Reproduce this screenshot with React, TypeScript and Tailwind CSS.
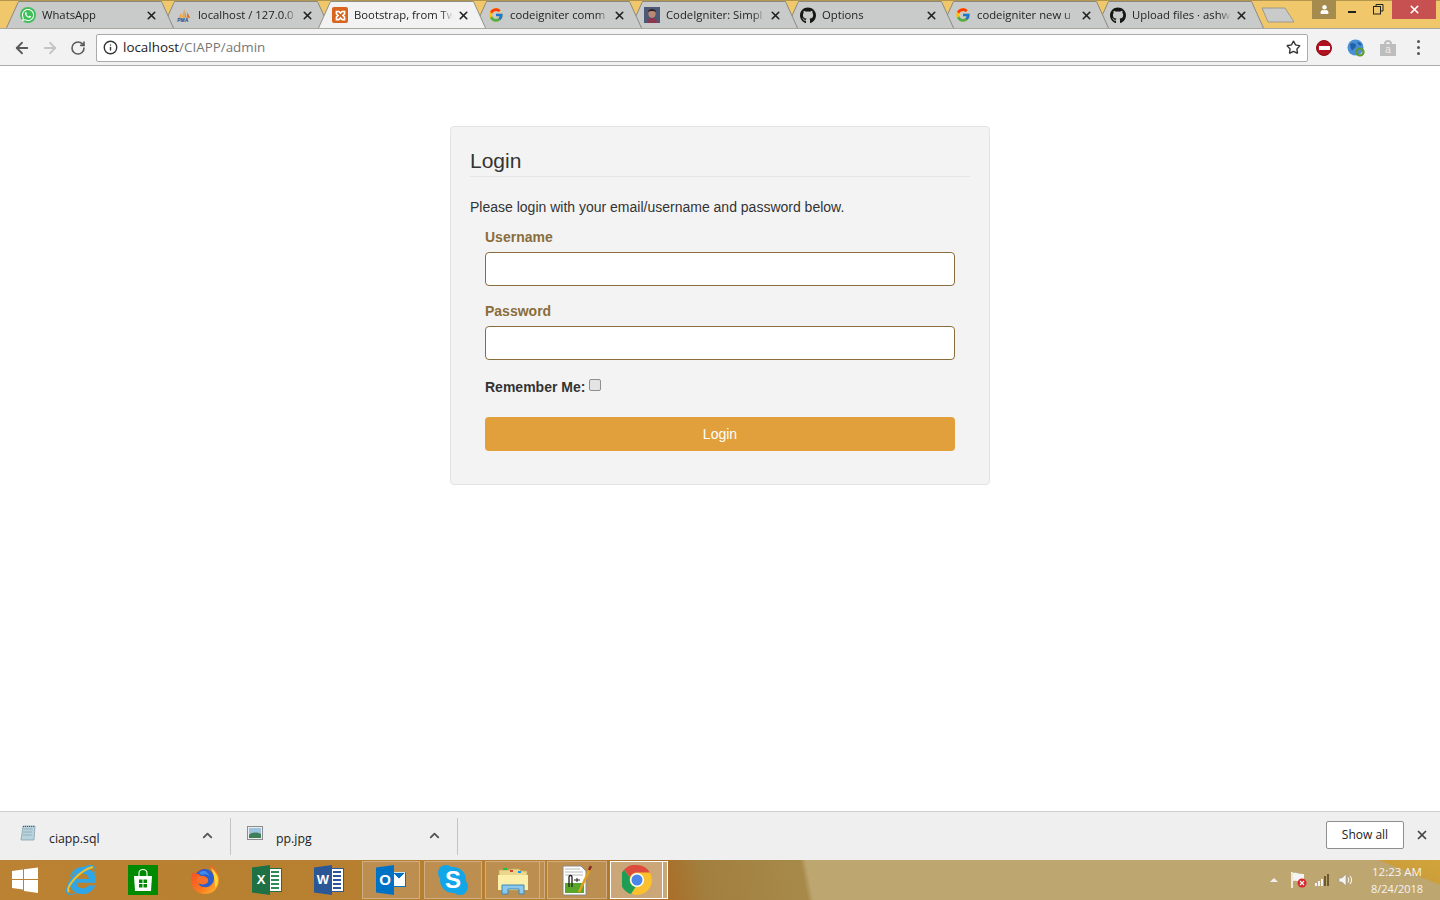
import { ArrowLeft, ArrowRight, ChevronUp, Info, RotateCw, Star, X } from "lucide-react";
import { FcGoogle } from "react-icons/fc";
import { FaGithub, FaInternetExplorer, FaUser, FaWhatsapp } from "react-icons/fa";

const uiFont = "font-['Open_Sans',sans-serif]";
const pageFont = "font-['Liberation_Sans',Arial,sans-serif]";

const XamppIcon = () => (
  <div className="w-4 h-4 rounded-[2px] bg-[#D9641E] flex items-center justify-center">
    <svg viewBox="0 0 16 16" className="w-[13px] h-[13px]" fill="none" stroke="#fff" strokeWidth="2">
      <path d="M3 3h3l2 2 2-2h3v3l-2 2 2 2v3h-3l-2-2-2 2H3v-3l2-2-2-2z" />
    </svg>
  </div>
);

const PmaIcon = () => (
  <svg viewBox="0 0 18 16" className="w-[17px] h-4">
    <path d="M3 11 6 5v6z" fill="#F0A040" />
    <path d="M6.500 11 9 2v9z" fill="#F2A63A" />
    <path d="M9.500 11V1l2.500 10z" fill="#E8912C" />
    <path d="M12.500 11V5l3.500 6z" fill="#D9701E" />
    <text x="1.500" y="15.500" fontSize="5.500" fontWeight="700" fontStyle="italic" fill="#27407F" fontFamily="Liberation Sans">PMA</text>
  </svg>
);

const AvatarIcon = () => (
  <svg viewBox="0 0 16 16" className="w-4 h-4">
    <rect width="16" height="16" fill="#4C5A78" />
    <ellipse cx="8" cy="6.500" rx="3.600" ry="4.400" fill="#B98A72" />
    <path d="M4 5c0-4 8-4 8 0-2-1.500-6-1.500-8 0z" fill="#2A2024" />
    <path d="M3 16c0-4 2-5 5-5s5 1 5 5z" fill="#8E3550" />
  </svg>
);

const WhatsappIcon = () => (
  <div className="w-4 h-4 rounded-full bg-[#3FBF5A] flex items-center justify-center">
    <FaWhatsapp className="text-white text-[14px]" />
  </div>
);

// titles stop where the reference fades them out
const tabs = [
  { title: "WhatsApp", icon: <WhatsappIcon /> },
  { title: "localhost / 127.0.0", icon: <PmaIcon /> },
  { title: "Bootstrap, from Tw", icon: <XamppIcon />, active: true },
  { title: "codeigniter comm", icon: <FcGoogle className="text-[16px]" /> },
  { title: "CodeIgniter: Simpl", icon: <AvatarIcon /> },
  { title: "Options", icon: <FaGithub className="text-[17px] text-[#161614]" /> },
  { title: "codeigniter new u", icon: <FcGoogle className="text-[16px]" />, tight: true },
  { title: "Upload files · ashw", icon: <FaGithub className="text-[17px] text-[#161614]" />, tight: true },
];

const Tab = ({ title, icon, active, tight, index }: { title: string; icon: React.ReactNode; active?: boolean; tight?: boolean; index: number }) => (
  <div
    className={`relative w-[168px] h-[28px] shrink-0 first:ml-0 ${tight ? "-ml-[13px]" : "-ml-[12px]"}`}
    style={{ zIndex: active ? 20 : 10 - index }}
  >
    <svg viewBox="0 0 168 28" className="absolute inset-0 w-[168px] h-[28px]">
      <path
        d="M0.500 28 L12.500 1.500 L155.500 1.500 L167.500 28"
        fill={active ? "#F2F2F2" : "#C9CACA"}
        stroke={active ? "#8F8F85" : "#8A8A80"}
      />
    </svg>
    <div className="relative flex items-center h-[28px] pt-[2px]">
      <div className="ml-[14px] w-4 h-4 flex items-center justify-center shrink-0">{icon}</div>
      <div className="ml-[6px] w-[99px] overflow-hidden whitespace-nowrap text-[11.300px] text-[#222] [mask-image:linear-gradient(to_right,#000_88%,transparent)]">
        {title}
      </div>
      <X className="ml-[4px] w-[13px] h-[13px] text-[#222] shrink-0" strokeWidth={3} />
    </div>
  </div>
);

const TitleBar = () => (
  <div className={`h-[29px] flex bg-[#F0C76A] border-t border-[#B5964F] border-b-[1px] border-b-[#A8A8A0] pl-[6px] relative ${uiFont}`}>
    <div className="flex -mb-[1px] -mt-[1px]">
      {tabs.map((t, i) => (
        <Tab key={t.title} title={t.title} icon={t.icon} active={t.active} tight={t.tight} index={i} />
      ))}
      <svg viewBox="0 0 36 18" className="w-9 h-[18px] mt-[6px] -ml-[3px] shrink-0">
        <path d="M1 2 H24 L33 16 H7 Z" fill="#C9CACA" stroke="#9A9A8E" />
      </svg>
    </div>
    <div className="flex items-start ml-auto -mt-[1px] h-5">
      <div className="w-6 h-[19px] bg-[#A68B4E] flex items-center justify-center">
        <FaUser className="text-white text-[9px]" />
      </div>
      <div className="w-[32px] h-[19px] flex items-center justify-center">
        <div className="w-2 h-[2px] bg-[#222] mt-[5px]" />
      </div>
      <div className="w-[20px] h-[19px] flex items-center justify-center">
        <svg viewBox="0 0 11 11" className="w-[11px] h-[11px]" fill="none" stroke="#222" strokeWidth="1">
          <path d="M3 2.500V.500h7v6.500H8" />
          <rect x=".5" y="2.500" width="7" height="7.500" />
        </svg>
      </div>
      <div className="ml-[4px] mr-[4px] w-[44px] h-[19px] bg-[#C75050] flex items-center justify-center">
        <X className="w-[13px] h-[13px] text-white" strokeWidth={3} />
      </div>
    </div>
  </div>
);

const Toolbar = () => (
  <div className="h-[37px] bg-[#F2F2F2] border-b border-[#ABABAB] flex items-center pl-[13px] pt-[1px]">
    <ArrowLeft className="w-[18px] h-[18px] text-[#5A5A5A]" strokeWidth={2.400} />
    <ArrowRight className="ml-[10px] w-[18px] h-[18px] text-[#C4C4C4]" strokeWidth={2.400} />
    <RotateCw className="ml-[11px] w-[16px] h-[16px] text-[#5A5A5A]" strokeWidth={2.400} />
    <div className="ml-[10px] w-[1212px] h-[28px] bg-white border border-[#ABABAB] rounded-[2px] flex items-center pl-[6px] pr-[6px]">
      <Info className="w-[15px] h-[15px] text-[#333]" strokeWidth={2.200} />
      <span className={`ml-[5px] text-[13.400px] text-[#222] ${uiFont}`}>localhost</span>
      <span className={`text-[13.400px] text-[#777] ${uiFont}`}>/CIAPP/admin</span>
      <Star className="ml-auto w-[15px] h-[15px] text-[#333]" strokeWidth={2.200} />
    </div>
    <div className="ml-[8px] w-[16px] h-[16px] rounded-full bg-[#B01220] flex items-center justify-center border border-[#8E0C18]">
      <div className="w-[11px] h-[4px] bg-white" />
    </div>
    <svg viewBox="0 0 18 18" className="ml-[15px] w-[18px] h-[18px]">
      <circle cx="8.500" cy="8.500" r="8" fill="#4A8FD8" />
      <path d="M3 5c3-2 5-1 6 1s-2 3-3 5-3-3-3-6zM10 3c2 0 4 1 5 3-2 1-4 0-5-3z" fill="#2462A8" />
      <circle cx="13" cy="13" r="3.500" fill="none" stroke="#5E9A2E" strokeWidth="2.200" />
    </svg>
    <div className={`ml-[15px] relative w-[16px] h-[16px] ${pageFont}`}>
      <div className="absolute left-[4px] top-0 w-[8px] h-[6px] rounded-t-[4px] border-2 border-[#BDBDBD]" />
      <div className="absolute left-0 bottom-0 w-[16px] h-[12px] bg-[#BDBDBD] flex items-center justify-center text-[10px] leading-none text-[#EDEDED]">a</div>
    </div>
    <div className="ml-[21px] flex flex-col gap-[3px]">
      <div className="w-[3px] h-[3px] rounded-full bg-[#555]" />
      <div className="w-[3px] h-[3px] rounded-full bg-[#555]" />
      <div className="w-[3px] h-[3px] rounded-full bg-[#555]" />
    </div>
  </div>
);

const LoginCard = () => (
  <div className={`w-[540px] h-[359px] mx-auto mt-[60px] bg-[#F3F3F3] border border-[#E3E3E3] rounded-[4px] px-[19px] pt-[19px] text-[#333] ${pageFont}`}>
    <h1 className="text-[21px] leading-[30px] h-[31px] border-b border-[#E5E5E5]">Login</h1>
    <p className="mt-[20px] text-[14px] leading-[20px]">Please login with your email/username and password below.</p>
    <div className="px-[15px]">
      <label className="block mt-[10px] text-[14px] leading-[20px] font-bold text-[#8A6D3B]">Username</label>
      <input className="block mt-[5px] w-full h-[34px] bg-white border border-[#8A6D3B] rounded-[4px]" />
      <label className="block mt-[15px] text-[14px] leading-[20px] font-bold text-[#8A6D3B]">Password</label>
      <input type="password" className="block mt-[5px] w-full h-[34px] bg-white border border-[#8A6D3B] rounded-[4px]" />
      <div className="mt-[17px] h-[20px] flex items-start">
        <span className="text-[14px] leading-[20px] font-bold">Remember Me:</span>
        <div className="ml-[4px] mt-[2px] w-3 h-3 rounded-[2px] bg-[#E4E4E4] border border-[#8F8F8F]" />
      </div>
      <button className="block mt-[20px] w-full h-[34px] bg-[#E2A03C] rounded-[4px] text-white text-[14px]">Login</button>
    </div>
  </div>
);

const SqlFileIcon = () => (
  <svg viewBox="0 0 16 16" className="w-4 h-4">
    <path d="M3 1h12l-1 14H1z" fill="#B9D3DE" stroke="#7E98A4" strokeWidth=".7" />
    <path d="M3.500 4h9M3 7h9M2.700 10h9" stroke="#8AA5B0" strokeWidth=".8" />
    <path d="M3 1.500h12" stroke="#555" strokeDasharray="1 1" />
  </svg>
);

const ImageFileIcon = () => (
  <svg viewBox="0 0 16 14" className="w-4 h-[14px]">
    <rect x=".5" y=".5" width="15" height="13" fill="#EDEDED" stroke="#8C8C8C" />
    <rect x="2" y="2" width="12" height="10" fill="#9CC4DC" />
    <path d="M2 9c3-3 7-3 12-1v4H2z" fill="#3F7F5C" />
  </svg>
);

const DownloadItem = ({ name, icon, width, iconLeft, textLeft }: { name: string; icon: React.ReactNode; width: string; iconLeft: string; textLeft: string }) => (
  <div className={`flex items-center h-[37px] ${width} border-r border-[#C4C4C4]`}>
    <div className={`-mt-[6px] ${iconLeft} w-4 flex justify-center`}>{icon}</div>
    <span className={`${textLeft} mt-[6px] text-[12.300px] text-[#222] ${uiFont}`}>{name}</span>
    <ChevronUp className="ml-auto mr-[15px] -mt-[2px] w-[15px] h-[15px] text-[#555]" strokeWidth={3} />
  </div>
);

const DownloadBar = () => (
  <div className="h-[49px] bg-[#EFEFEF] border-t border-[#CFCFCF] flex items-center">
    <DownloadItem name="ciapp.sql" icon={<SqlFileIcon />} width="w-[231px]" iconLeft="ml-[20px]" textLeft="ml-[13px]" />
    <DownloadItem name="pp.jpg" icon={<ImageFileIcon />} width="w-[227px]" iconLeft="ml-[16px]" textLeft="ml-[13px]" />
    <button className={`ml-auto -mt-[3px] w-[78px] h-[28px] bg-white border border-[#8F8F8F] rounded-[2px] text-[12px] text-[#222] ${uiFont}`}>
      Show all
    </button>
    <X className="ml-[11px] mr-[11px] -mt-[2px] w-[14px] h-[14px] text-[#444]" strokeWidth={3} />
  </div>
);

const WindowsLogo = () => (
  <svg viewBox="0 0 26 26" className="w-[26px] h-[26px]">
    <path d="M0 4l11-1.500V12H0zM12 2.300 26 .5V12H12zM0 13h11v9.500L0 21zM12 13h14v13l-14-2z" fill="#fff" />
  </svg>
);

const IeIcon = () => (
  <div className="relative w-[30px] h-[30px] flex items-center justify-center">
    <FaInternetExplorer className="text-[30px] text-[#2FA6E8]" />
    <svg viewBox="0 0 30 30" className="absolute inset-0 w-[30px] h-[30px]" fill="none">
      <path d="M3 27C-1 22 14 5 27 2" stroke="#F2C029" strokeWidth="2" />
    </svg>
  </div>
);

const StoreIcon = () => (
  <div className="w-[30px] h-[30px] bg-[#008A00] flex items-center justify-center">
    <svg viewBox="0 0 20 24" className="w-[20px] h-[24px]">
      <path d="M6 8V5a4 3.500 0 0 1 8 0v3" fill="none" stroke="#fff" strokeWidth="1.100" />
      <path d="M1 8h18l-1 15H2z" fill="#fff" />
      <path d="M6 11.500h3.500v3.500H6zM10.500 11.500H14v3.500h-3.500zM6 16h3.500v3.500H6zM10.500 16H14v3.500h-3.500z" fill="#008A00" />
    </svg>
  </div>
);

const FirefoxIcon = () => (
  <svg viewBox="0 0 30 30" className="w-[30px] h-[30px]">
    <defs>
      <linearGradient id="ff" x1="0" y1="0" x2="1" y2="1">
        <stop offset="0" stopColor="#F6442A" />
        <stop offset="0.600" stopColor="#FB7A1E" />
        <stop offset="1" stopColor="#FFC32E" />
      </linearGradient>
    </defs>
    <path d="M20 0c6 4 9 9 9 15 0 8-6 14-14 14S1 23 1 15c0-3 1-6 2-8l2 2c2-3 5-5 9-5 3 0 6 1 8 3-1-3-2-5-2-7z" fill="url(#ff)" />
    <path d="M21 3c5 4 7 8 7 12 0 3-1 6-3 8 0-7-1-14-4-20z" fill="#FFD83A" />
    <path d="M6 9c2-3 5-5 9-5 5 0 9 4 9 9 0 6-5 10-10 9-3 0-5-2-6-4 3 2 9 2 10-2 0-3-2-5-6-5-2 0-3-1-3-2-1 0-2 0-3 0z" fill="#2B5FCB" />
    <path d="M9 8c2-2 4-2 6-2 2 1 4 3 4 5-2-2-5-2-7-1-1-1-2-1-3-2z" fill="#3F8CE8" />
    <path d="M8 11c2 0 3 1 5 1 4 0 6 2 5 5-2 3-7 3-10 1-1-2-1-5 0-7z" fill="#F9702A" />
  </svg>
);

const OfficeIcon = ({ letter, bg, line }: { letter: string; bg: string; line: string }) => (
  <div className="relative w-[30px] h-[30px]">
    <div className="absolute right-0 top-[3px] w-[20px] h-[24px] bg-white border flex flex-col justify-center gap-[2px] pl-[8px] pr-[2px]" style={{ borderColor: bg }}>
      <div className="h-[2px]" style={{ background: line }} />
      <div className="h-[2px]" style={{ background: line }} />
      <div className="h-[2px]" style={{ background: line }} />
      <div className="h-[2px]" style={{ background: line }} />
      <div className="h-[2px]" style={{ background: line }} />
    </div>
    <div
      className={`absolute left-0 top-0 w-[18px] h-[30px] flex items-center justify-center text-white text-[13px] font-bold [clip-path:polygon(0_8%,100%_0,100%_100%,0_92%)] ${pageFont}`}
      style={{ background: bg }}
    >
      {letter}
    </div>
  </div>
);

const OutlookIcon = () => (
  <div className="relative w-[30px] h-[30px]">
    <svg viewBox="0 0 14 15" className="absolute right-0 top-[7px] w-[14px] h-[15px]">
      <rect width="14" height="15" fill="#0072C6" />
      <rect x="1" y="1" width="12" height="13" fill="#fff" />
      <path d="M1 1l6 6 6-6v-.5H1z" fill="#0072C6" stroke="#fff" strokeWidth=".8" />
    </svg>
    <div className={`absolute left-0 top-0 w-[18px] h-[30px] bg-[#0072C6] flex items-center justify-center text-white text-[15px] font-bold [clip-path:polygon(0_8%,100%_0,100%_100%,0_92%)] ${pageFont}`}>
      O
    </div>
  </div>
);

const SkypeIcon = () => (
  <div className={`relative w-[30px] h-[30px] flex items-center justify-center text-white text-[24px] font-bold ${pageFont}`}>
    <svg viewBox="0 0 30 30" className="absolute inset-0 w-[30px] h-[30px]" fill="#12A5E8">
      <circle cx="15" cy="15" r="13" />
      <circle cx="8" cy="8" r="8" />
      <circle cx="22" cy="22" r="8" />
    </svg>
    <span className="relative">S</span>
  </div>
);

const FolderIcon = () => (
  <svg viewBox="0 0 32 30" className="w-[32px] h-[30px]">
    <path d="M2 5h10l2-1h8l2 2h6v19H2z" fill="#EBD78B" stroke="#C2A85E" strokeWidth=".8" />
    <path d="M1 10h30v15H1z" fill="#FBEFA9" />
    <rect x="6" y="3" width="4" height="2" fill="#20C040" />
    <rect x="13" y="5" width="3" height="2" fill="#D84030" />
    <rect x="21" y="6" width="3" height="2" fill="#2090E0" />
    <path d="M5 29V20h22v9h-5v-5H11v5z" fill="#8CC8EC" stroke="#3C88B8" />
  </svg>
);

const NotepadIcon = () => (
  <svg viewBox="0 0 32 32" className="w-[32px] h-[32px]">
    <path d="M2 2h18l5 5v24H2z" fill="#fff" stroke="#8A8A8A" />
    <path d="M4 19h19v10H4z" fill="#5AA62A" />
    <path d="M4 5h15M4 8h18M4 11h18" stroke="#B8B8B8" />
    <path d="M8 23V13c0-2 3-2 3 0v10" fill="none" stroke="#222" strokeWidth="1.300" />
    <path d="M13 16h6M16 14v4" stroke="#222" strokeWidth="1" />
    <path d="M18 28 29 5" stroke="#E0A020" strokeWidth="2.500" />
    <path d="M28 6l2-4" stroke="#8A2A2A" strokeWidth="2.500" />
  </svg>
);

const ChromeIcon = () => (
  <svg viewBox="0 0 30 30" className="w-[30px] h-[30px]">
    <circle cx="15" cy="15" r="15" fill="#FBC02D" />
    <path d="M15 0a15 15 0 0 1 13 7.500H15a7.500 7.500 0 0 0-7 5L2 4.800A15 15 0 0 1 15 0z" fill="#DD4B3E" />
    <path d="M2 4.800 8 12.500a7.500 7.500 0 0 0 5.500 9.500L9 29A15 15 0 0 1 2 4.800z" fill="#1E9E55" />
    <circle cx="15" cy="15" r="7" fill="#fff" />
    <circle cx="15" cy="15" r="5.500" fill="#4A86E8" />
  </svg>
);

const TaskButton = ({ children, className }: { children?: React.ReactNode; className: string }) => (
  <div className={`h-[38px] border flex items-center justify-center shrink-0 ${className}`}>{children}</div>
);

const Taskbar = () => (
  <div className="h-[40px] flex items-center bg-[linear-gradient(22deg,transparent_553px,#CC9E3C_554px,#D2A53A_100%),linear-gradient(79deg,#BA8232_0%,#B57E30_40%,#AC722B_45%,#A9702B_46.500%,#A27F3E_49%,#A78A4A_55.800%,#BEA671_56.200%,#BEA671_100%)]">
    <div className="ml-[12px] w-[26px] flex justify-center"><WindowsLogo /></div>
    <div className="ml-[28px]"><IeIcon /></div>
    <div className="ml-[32px]"><StoreIcon /></div>
    <div className="ml-[32px]"><FirefoxIcon /></div>
    <div className="ml-[32px]"><OfficeIcon letter="X" bg="#1F7145" line="#2E8B57" /></div>
    <div className="ml-[32px]"><OfficeIcon letter="W" bg="#2B5796" line="#2B5796" /></div>
    <TaskButton className="ml-[18px] w-[58px] bg-[#BC8E50] border-[#D0AE82]"><OutlookIcon /></TaskButton>
    <TaskButton className="ml-[4px] w-[58px] bg-[#BC8E50] border-[#D0AE82]"><SkypeIcon /></TaskButton>
    <TaskButton className="ml-[3px] w-[55px] bg-[#BC8E50] border-[#D0AE82]"><FolderIcon /></TaskButton>
    <TaskButton className="w-[5px] bg-[#BC8E50] border-[#D0AE82] border-l-0" />
    <TaskButton className="ml-[2px] w-[60px] bg-[#BC8E50] border-[#D0AE82]"><NotepadIcon /></TaskButton>
    <TaskButton className="ml-[3px] w-[53px] bg-[#CBA678] border-white"><ChromeIcon /></TaskButton>
    <TaskButton className="w-[5px] bg-[#CBA678] border-white border-l-0" />

    <div className="ml-auto flex items-center">
      <div className="w-0 h-0 border-x-[4px] border-x-transparent border-b-[4px] border-b-[#F0F0F0]" />
      <svg viewBox="0 0 18 18" className="ml-[12px] w-[18px] h-[18px]">
        <path d="M2 1v16" stroke="#fff" strokeWidth="1.500" />
        <path d="M3 2c4-1 5 1 11 1v8c-5 0-7-2-11-1z" fill="#F4F4F4" />
        <circle cx="12" cy="12" r="4.500" fill="#D8262C" />
        <path d="M10 10l4 4M14 10l-4 4" stroke="#fff" strokeWidth="1.200" />
      </svg>
      <svg viewBox="0 0 16 14" className="ml-[7px] w-4 h-[14px]">
        <rect x="0" y="10" width="2" height="3" fill="#F2F2F2" />
        <rect x="3" y="8" width="2" height="5" fill="#F2F2F2" />
        <rect x="6" y="6" width="2" height="7" fill="#F2F2F2" />
        <rect x="9" y="3" width="2" height="10" fill="#6E5A30" />
        <rect x="12" y="1" width="2" height="12" fill="#6E5A30" />
      </svg>
      <svg viewBox="0 0 16 16" className="ml-[7px] w-4 h-4" fill="none" stroke="#F4F4F4">
        <path d="M1 6h3l4-4v12l-4-4H1z" fill="#F4F4F4" stroke="#8A8A8A" strokeWidth=".5" />
        <path d="M10 5.500c1 1.500 1 3.500 0 5M12 4c2 2.500 2 5.500 0 8" strokeWidth="1.100" />
      </svg>
      <div className={`ml-[17px] mr-[17px] w-[52px] text-[11.500px] leading-[17px] text-[#F4F4F4] ${uiFont}`}>
        <div className="text-center whitespace-nowrap">12:23 AM</div>
        <div className="text-center whitespace-nowrap text-[11px]">8/24/2018</div>
      </div>
    </div>
  </div>
);

export default function App() {
  return (
    <div className="h-[900px] w-[1440px] flex flex-col overflow-hidden bg-white">
      <TitleBar />
      <Toolbar />
      <div className="flex-1">
        <LoginCard />
      </div>
      <DownloadBar />
      <Taskbar />
    </div>
  );
}
